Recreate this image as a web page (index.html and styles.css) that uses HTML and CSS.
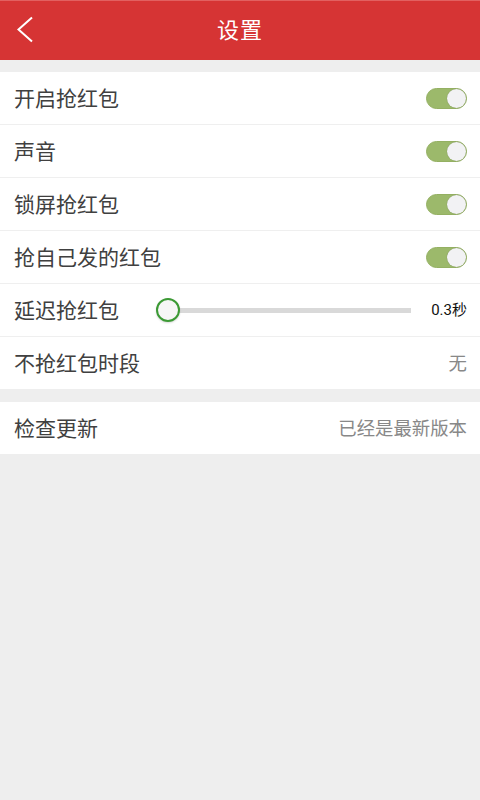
FILE: index.html
```html
<!DOCTYPE html>
<html lang="zh">
<head>
<meta charset="utf-8">
<title>设置</title>
<link rel="stylesheet" href="styles.css">
</head>
<body>
<div class="app">
  <header class="topbar">
    <span class="back"><svg width="20" height="28" viewBox="0 0 20 28"><path d="M16 1.5 L2.5 13.5 L16 25.5" fill="none" stroke="#fff" stroke-width="2"/></svg></span>
    <h1 class="title">设置</h1>
  </header>
  <div class="gap first"></div>
  <section class="group">
    <div class="row"><span class="label">开启抢红包</span><span class="switch on"><span class="knob"></span></span></div>
    <div class="row"><span class="label">声音</span><span class="switch on"><span class="knob"></span></span></div>
    <div class="row"><span class="label">锁屏抢红包</span><span class="switch on"><span class="knob"></span></span></div>
    <div class="row"><span class="label">抢自己发的红包</span><span class="switch on"><span class="knob"></span></span></div>
    <div class="row"><span class="label">延迟抢红包</span>
      <span class="slider"><span class="track"></span><span class="thumb"></span></span>
      <span class="value dark">0.3秒</span></div>
    <div class="row"><span class="label">不抢红包时段</span><span class="value">无</span></div>
  </section>
  <div class="gap"></div>
  <section class="group">
    <div class="row"><span class="label">检查更新</span><span class="value">已经是最新版本</span></div>
  </section>
</div>
</body>
</html>
```
FILE: styles.css
```css
* { box-sizing: border-box; }
html, body { margin: 0; padding: 0; }
body {
  background: #eeeeee;
  font-family: "Noto Sans CJK SC", "Noto Sans", sans-serif;
  width: 480px;
  height: 800px;
  overflow: hidden;
}
.topbar {
  height: 60px;
  background: #d63434;
  border-top: 1px solid #e26060;
  display: flex;
  align-items: center;
  justify-content: center;
  padding-bottom: 5px;
  position: relative;
}
.back {
  position: absolute;
  left: 16px;
  top: 15px;
  width: 20px;
  height: 28px;
  display: block;
}
.back svg { display: block; }
.title {
  margin: 0;
  color: #fff;
  font-size: 22px;
  line-height: 1;
  font-weight: normal;
  letter-spacing: 1px;
}
.gap { height: 13px; }
.gap.first { height: 12px; }
.group { background: #fff; }
.row {
  height: 52px;
  display: flex;
  align-items: center;
  padding: 0 13px 0 14px;
  border-top: 1px solid #efefef;
}
.row:first-child { border-top: none; }
.group .row + .row { height: 53px; }
.label {
  font-size: 21px;
  line-height: 1;
  color: #404040;
  flex: 0 0 auto;
  margin-top: -2px;
}
.switch {
  margin-left: auto;
  width: 41px;
  height: 21px;
  border-radius: 11px;
  background: #9cb96b;
  border: 1px solid #94b062;
  position: relative;
}
.knob {
  position: absolute;
  right: 0;
  top: 0;
  width: 19px;
  height: 19px;
  border-radius: 50%;
  background: #f2f2f4;
  box-shadow: 0 0 1px rgba(0,0,0,0.3);
}
.slider {
  flex: 1 1 auto;
  margin: 0 20px 0 48px;
  height: 24px;
  position: relative;
  display: flex;
  align-items: center;
}
.track {
  display: block;
  width: 100%;
  height: 5px;
  background: #d9d9d9;
}
.thumb {
  position: absolute;
  left: -11px;
  top: 0;
  width: 24px;
  height: 24px;
  border-radius: 50%;
  border: 2px solid #3c9a35;
  background: #f6f6f6;
  box-shadow: 0 1px 2px rgba(0,0,0,0.15);
}
.value {
  margin-left: auto;
  font-size: 18.4px;
  line-height: 1;
  color: #888;
  margin-top: -2px;
}
.value.dark {
  margin-left: 0;
  margin-top: 0;
  font-size: 15px;
  color: #111;
  font-family: "Roboto", "Noto Sans CJK SC", sans-serif;
}
```
